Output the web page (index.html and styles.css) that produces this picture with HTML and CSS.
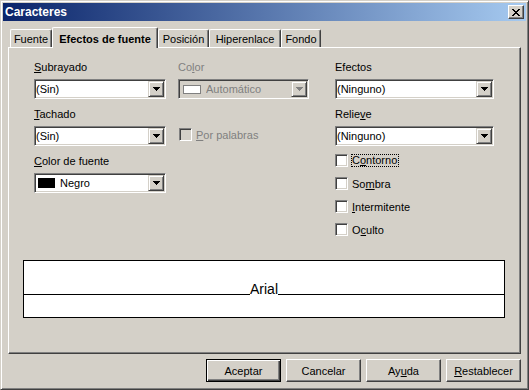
FILE: index.html
```html
<!DOCTYPE html>
<html>
<head>
    <title>Caracteres</title>
    <link rel="stylesheet" href="styles.css">
</head>
<body>
<div class="window">
    <div class="titlebar">
        <span class="title">Caracteres</span>
        <span class="close">
            <svg width="8" height="7" viewBox="0 0 8 7"><path d="M0 0h2v1H0zM6 0h2v1H6zM1 1h2v1H1zM5 1h2v1H5zM2 2h4v1H2zM3 3h2v1H3zM2 4h4v1H2zM1 5h2v1H1zM5 5h2v1H5zM0 6h2v1H0zM6 6h2v1H6z" fill="#000"/></svg>
        </span>
    </div>

    <div class="dialog">
        <div class="tabs">
            <div class="tab tab-fuente">Fuente</div>
            <div class="tab tab-efectos active">Efectos de fuente</div>
            <div class="tab tab-posicion">Posición</div>
            <div class="tab tab-hiper">Hiperenlace</div>
            <div class="tab tab-fondo">Fondo</div>
        </div>

        <div class="panel">
            <div class="columns">
                <!-- left column -->
                <div class="col col-left">
                    <div class="label"><u>S</u>ubrayado</div>
                    <div class="combo">
                        <span class="combo-text">(Sin)</span>
                        <span class="combo-btn"><svg width="7" height="4"><path d="M0 0h7v1H0zM1 1h5v1H1zM2 2h3v1H2zM3 3h1v1H3z"/></svg></span>
                    </div>
                    <div class="label"><u>T</u>achado</div>
                    <div class="combo">
                        <span class="combo-text">(Sin)</span>
                        <span class="combo-btn"><svg width="7" height="4"><path d="M0 0h7v1H0zM1 1h5v1H1zM2 2h3v1H2zM3 3h1v1H3z"/></svg></span>
                    </div>
                    <div class="label"><u>C</u>olor de fuente</div>
                    <div class="combo">
                        <span class="swatch swatch-black"></span>
                        <span class="combo-text">Negro</span>
                        <span class="combo-btn"><svg width="7" height="4"><path d="M0 0h7v1H0zM1 1h5v1H1zM2 2h3v1H2zM3 3h1v1H3z"/></svg></span>
                    </div>
                </div>

                <!-- middle column -->
                <div class="col col-mid">
                    <div class="label disabled">Co<u>l</u>or</div>
                    <div class="combo combo-disabled">
                        <span class="swatch swatch-auto"></span>
                        <span class="combo-text">Automático</span>
                        <span class="combo-btn"><svg width="7" height="4"><path d="M0 0h7v1H0zM1 1h5v1H1zM2 2h3v1H2zM3 3h1v1H3z" fill="#808080"/></svg></span>
                    </div>
                    <div class="check-row mid-check disabled">
                        <span class="box box-disabled"></span>
                        <span><u>P</u>or palabras</span>
                    </div>
                </div>

                <!-- right column -->
                <div class="col col-right">
                    <div class="label">Efectos</div>
                    <div class="combo">
                        <span class="combo-text">(Ninguno)</span>
                        <span class="combo-btn"><svg width="7" height="4"><path d="M0 0h7v1H0zM1 1h5v1H1zM2 2h3v1H2zM3 3h1v1H3z"/></svg></span>
                    </div>
                    <div class="label">Relie<u>v</u>e</div>
                    <div class="combo combo-last">
                        <span class="combo-text">(Ninguno)</span>
                        <span class="combo-btn"><svg width="7" height="4"><path d="M0 0h7v1H0zM1 1h5v1H1zM2 2h3v1H2zM3 3h1v1H3z"/></svg></span>
                    </div>
                    <div class="check-row">
                        <span class="box"></span>
                        <span class="focus">C<u>o</u>ntorno</span>
                    </div>
                    <div class="check-row">
                        <span class="box"></span>
                        <span>So<u>m</u>bra</span>
                    </div>
                    <div class="check-row">
                        <span class="box"></span>
                        <span><u>I</u>ntermitente</span>
                    </div>
                    <div class="check-row">
                        <span class="box"></span>
                        <span>O<u>c</u>ulto</span>
                    </div>
                </div>
            </div>

            <div class="preview">
                <div class="preview-line">
                    <span class="rule"></span>
                    <span class="sample">Arial</span>
                    <span class="rule"></span>
                </div>
            </div>
        </div>

        <div class="buttons">
            <button class="btn btn-default">Aceptar</button>
            <button class="btn">Cancelar</button>
            <button class="btn">Ay<u>u</u>da</button>
            <button class="btn"><u>R</u>establecer</button>
        </div>
    </div>
</div>
</body>
</html>
```

FILE: styles.css
```css
* {
    box-sizing: border-box;
}

body {
    margin: 0;
    font-family: "Liberation Sans", Arial, sans-serif;
    font-size: 11px;
    color: #000;
    background-color: #d4d0c8;
}

.window {
    width: 529px;
    height: 390px;
    padding: 2px;
    background-color: #d4d0c8;
    border: 1px solid;
    border-color: #d4d0c8 #404040 #404040 #d4d0c8;
    box-shadow: inset 1px 1px #fff, inset -1px -1px #808080;
    display: flex;
    flex-direction: column;
}

.titlebar {
    height: 18px;
    padding: 0 2px;
    background: linear-gradient(to right, #0a246a, #a6caf0);
    display: flex;
    align-items: center;
    justify-content: space-between;
}

.title {
    color: #fff;
    font-weight: bold;
    font-size: 12px;
}

.close {
    width: 16px;
    height: 14px;
    background-color: #d4d0c8;
    border: 1px solid;
    border-color: #fff #404040 #404040 #fff;
    box-shadow: inset -1px -1px #808080;
    display: flex;
    align-items: center;
    justify-content: center;
}

.dialog {
    flex: 1;
    padding: 6px 5px 0 5px;
    display: flex;
    flex-direction: column;
}

/* tabs */
.tabs {
    height: 20px;
    padding-left: 2px;
    display: flex;
    align-items: flex-end;
}

.tab {
    height: 18px;
    padding-top: 3px;
    line-height: 13px;
    text-align: center;
    white-space: nowrap;
    border-top: 1px solid #fff;
    border-left: 1px solid #fff;
    border-right: 1px solid #404040;
    box-shadow: inset -1px 0 #808080;
    border-radius: 2px 2px 0 0;
}

.tab.active {
    height: 21px;
    margin-bottom: -1px;
    padding-top: 5px;
    font-weight: bold;
    background-color: #d4d0c8;
    position: relative;
    z-index: 1;
}

.tab-fuente { width: 42px; }
.tab-efectos { width: 106px; }
.tab-posicion { width: 51px; }
.tab-hiper { width: 72px; }
.tab-fondo { width: 40px; }

.panel {
    height: 307px;
    padding: 13px 0 0 14px;
    border: 1px solid;
    border-color: #fff #404040 #404040 #fff;
    box-shadow: inset -1px -1px #808080;
}

.columns {
    display: flex;
    padding-left: 11px;
}

.col-left {
    width: 132px;
    margin-right: 12px;
}

.col-mid {
    width: 131px;
    margin-right: 26px;
}

.col-right {
    width: 159px;
}

.label {
    height: 13px;
    line-height: 13px;
    margin-bottom: 5px;
    white-space: nowrap;
}

.disabled {
    color: #808080;
}

/* combo boxes */
.combo {
    height: 20px;
    margin-bottom: 9px;
    padding: 1px;
    background-color: #fff;
    border: 1px solid;
    border-color: #808080 #fff #fff #808080;
    box-shadow: inset 1px 1px #404040, inset -1px -1px #d4d0c8;
    display: flex;
    align-items: center;
}

.combo-last {
    margin-bottom: 3px;
}

.combo-disabled {
    margin-bottom: 0;
    background-color: #d4d0c8;
    color: #808080;
}

.combo-text {
    flex: 1;
    white-space: nowrap;
    overflow: hidden;
    line-height: 13px;
}

.combo-btn {
    width: 16px;
    height: 16px;
    background-color: #d4d0c8;
    border: 1px solid;
    border-color: #d4d0c8 #404040 #404040 #d4d0c8;
    box-shadow: inset 1px 1px #fff, inset -1px -1px #808080;
    display: flex;
    align-items: center;
    justify-content: center;
}

.combo-btn svg {
    display: block;
}

.swatch {
    width: 18px;
    height: 10px;
    margin: 0 5px 0 2px;
}

.swatch-black {
    width: 17px;
    background-color: #000;
}

.swatch-auto {
    height: 9px;
    margin-left: 3px;
    background-color: #fff;
    border: 1px solid #808080;
}

/* check boxes */
.check-row {
    height: 23px;
    display: flex;
    align-items: center;
    white-space: nowrap;
}

.mid-check {
    margin-top: 24px;
    padding-left: 1px;
}

.box {
    width: 13px;
    height: 13px;
    margin-right: 4px;
    background-color: #fff;
    border: 1px solid;
    border-color: #808080 #fff #fff #808080;
    box-shadow: inset 1px 1px #404040, inset -1px -1px #d4d0c8;
}

.box-disabled {
    background-color: #d4d0c8;
}

.focus {
    margin-left: -1px;
    padding-right: 1px;
    line-height: 11px;
    border: 1px dotted #000;
}

/* preview */
.preview {
    width: 482px;
    height: 58px;
    margin-top: 19px;
    padding-top: 21px;
    background-color: #fff;
    border: 1px solid #000;
}

.preview-line {
    display: flex;
    align-items: flex-end;
}

.rule {
    flex: 1;
    height: 1px;
    margin-bottom: 1px;
    background-color: #000;
}

.sample {
    font-size: 14px;
    line-height: 14px;
}

/* bottom buttons */
.buttons {
    margin-top: 5px;
    display: flex;
    justify-content: flex-end;
    gap: 5px;
}

.btn {
    width: 75px;
    height: 23px;
    padding: 0;
    font-family: inherit;
    font-size: 11px;
    color: #000;
    background-color: #d4d0c8;
    border: 1px solid;
    border-color: #fff #404040 #404040 #fff;
    box-shadow: inset -1px -1px #808080;
    border-radius: 0;
}

.btn-default {
    border-color: #000;
    box-shadow: inset 1px 1px #fff, inset -1px -1px #404040, inset -2px -2px #808080;
}
```
